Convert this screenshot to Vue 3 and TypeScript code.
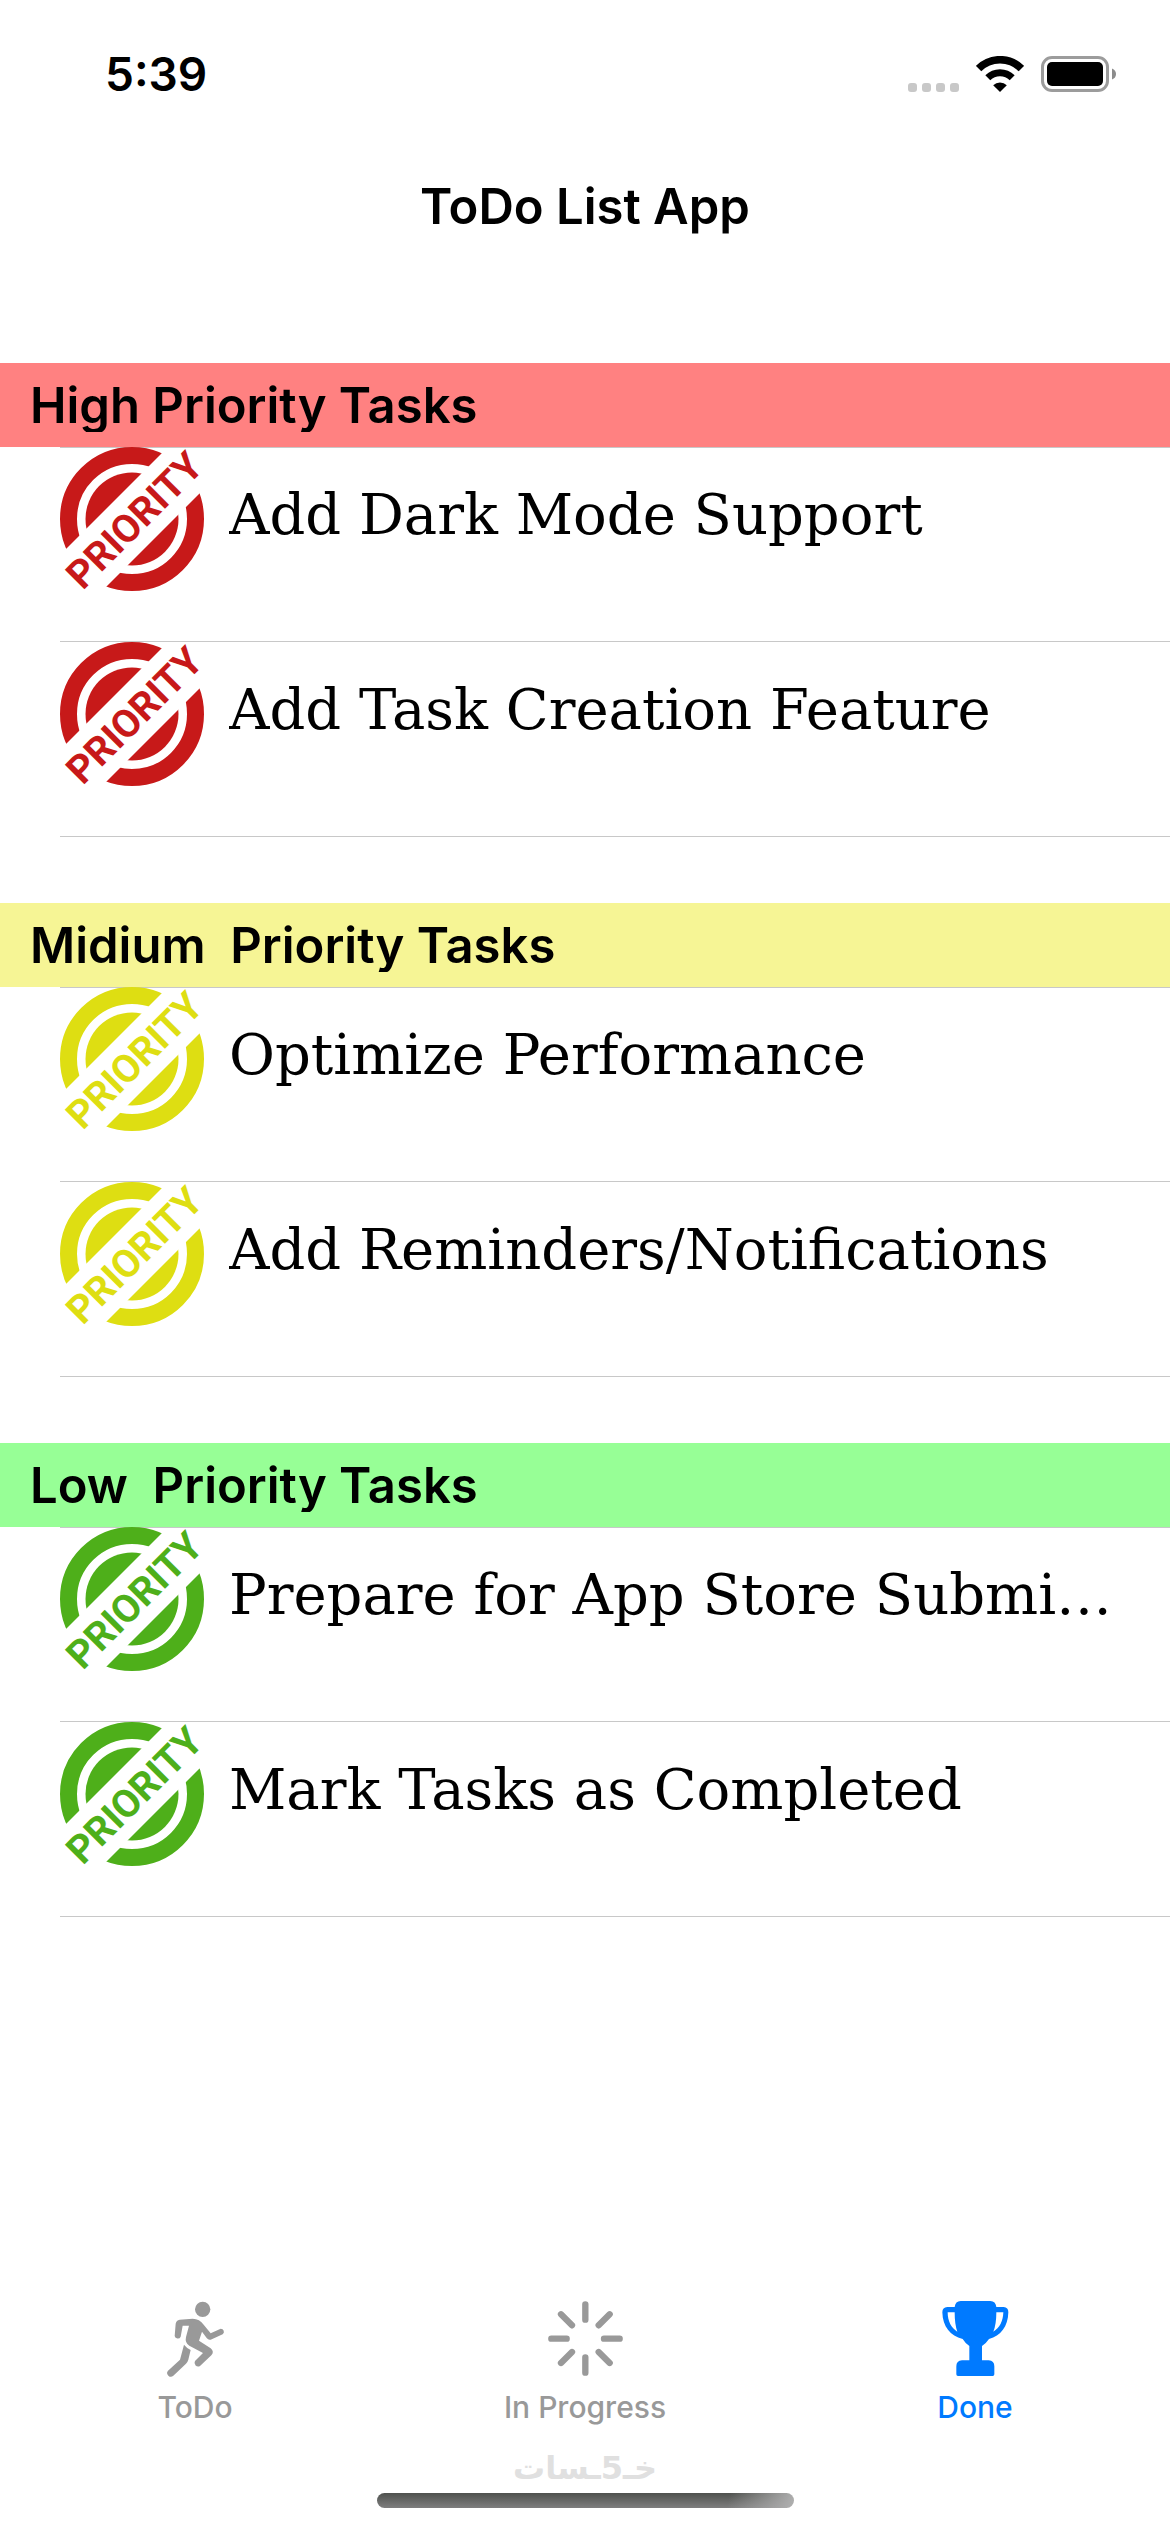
<script setup lang="ts">
import { ref } from 'vue'

type TabId = 'todo' | 'progress' | 'done'

interface Section {
  level: 'high' | 'medium' | 'low'
  title: string
  tasks: string[]
}

const sections: Section[] = [
  {
    level: 'high',
    title: 'High Priority Tasks',
    tasks: ['Add Dark Mode Support', 'Add Task Creation Feature'],
  },
  {
    level: 'medium',
    title: 'Midium  Priority Tasks',
    tasks: ['Optimize Performance', 'Add Reminders/Notifications'],
  },
  {
    level: 'low',
    title: 'Low  Priority Tasks',
    tasks: ['Prepare for App Store Submi…', 'Mark Tasks as Completed'],
  },
]

const tabs: { id: TabId; label: string }[] = [
  { id: 'todo', label: 'ToDo' },
  { id: 'progress', label: 'In Progress' },
  { id: 'done', label: 'Done' },
]

const activeTab = ref<TabId>('done')
</script>

<template>
  <div class="app">
    <header class="status">
      <time class="clock">5:39</time>
      <div class="indicators">
        <svg class="dots" viewBox="0 0 51 36" aria-hidden="true">
          <rect v-for="n in 4" :key="n" :x="(n - 1) * 14" y="27" width="9" height="9" rx="3" />
        </svg>
        <svg class="wifi" viewBox="0 0 48 36" aria-hidden="true">
          <path d="M2.6 12.6A30.2 30.2 0 0 1 45.4 12.6" fill="none" stroke="#000" stroke-width="7.6" />
          <path d="M11.8 21.8A17.3 17.3 0 0 1 36.2 21.8" fill="none" stroke="#000" stroke-width="7" />
          <path d="M24 36L17.2 29.2A9.6 9.6 0 0 1 30.8 29.2Z" />
        </svg>
        <svg class="battery" viewBox="0 0 75 36" aria-hidden="true">
          <rect x="1.5" y="1.5" width="65" height="33" rx="9.5" fill="none" stroke="#9c9c9c" stroke-width="3" />
          <rect x="6" y="6" width="56" height="24" rx="5" />
          <path d="M71 12.5Q75 14 75 18Q75 22 71 23.5Z" fill="#8c8c8c" />
        </svg>
      </div>
    </header>

    <h1 class="title">ToDo List App</h1>

    <main class="list">
      <section v-for="section in sections" :key="section.level" class="section" :class="section.level">
        <h2 class="section-head"><span>{{ section.title }}</span></h2>
        <ul class="tasks">
          <li v-for="task in section.tasks" :key="task" class="task">
            <svg class="stamp" viewBox="0 0 144 144" aria-hidden="true">
              <clipPath :id="'band-' + section.level">
                <path d="M0 0H108L0 108ZM186 0V186H0Z" />
              </clipPath>
              <g :clip-path="'url(#band-' + section.level + ')'">
                <circle cx="72" cy="72" r="63.5" fill="none" stroke="currentColor" stroke-width="17" />
                <circle cx="72" cy="72" r="46.5" fill="currentColor" />
              </g>
              <text class="stamp-text" transform="translate(74 73) rotate(-45)" y="14" text-anchor="middle">PRIORITY</text>
            </svg>
            <span class="task-name">{{ task }}</span>
          </li>
        </ul>
      </section>
    </main>

    <nav class="tabs">
      <button
        v-for="tab in tabs"
        :key="tab.id"
        type="button"
        class="tab"
        :class="{ active: tab.id === activeTab }"
        @click="activeTab = tab.id"
      >
        <svg v-if="tab.id === 'todo'" class="tab-icon" viewBox="82 63 225 228" aria-hidden="true">
          <circle cx="216" cy="88" r="23" fill="currentColor" />
          <path
            d="M147 119L186 116Q207 116 219 134L240 160L270 146A9.500 9.500 0 0 1 276 163L240 179Q233 181 228 174L214 155L205 182L240 205Q252 215 242 226L208 258A11 11 0 0 1 193 243L217 219L176 197Q162 188 166 171L175 137H156L150 170A9.500 9.500 0 0 1 132 168L135 131Q137 120 147 119Z"
            fill="currentColor"
          />
          <path
            d="M160 194Q168 204 180 210L173 239Q171 246 166 251L128 287A11 11 0 0 1 112 272L148 239Z"
            fill="currentColor"
          />
        </svg>
        <svg v-else-if="tab.id === 'progress'" class="tab-icon" viewBox="201 63 225 228" aria-hidden="true">
          <path
            d="M313 73V119M313 232V278M211 176H257M369 176H416M240 103L273 136M386 103L353 136M240 249L273 216M386 249L353 216"
            fill="none"
            stroke="currentColor"
            stroke-width="19"
            stroke-linecap="round"
          />
        </svg>
        <svg v-else class="tab-icon" viewBox="110 63 225 228" aria-hidden="true">
          <path
            fill="currentColor"
            fill-rule="evenodd"
            d="M178 63H267Q283 63 285 81H307Q321 82 321 97C320 140 298 168 263 177Q256 188 242 198V241H262Q279 242 279 259V283Q279 288 274 288H170Q165 288 165 283V259Q165 242 182 241H204V198Q192 190 184 177C147 168 124 140 123 97Q123 82 138 81H160Q162 63 178 63ZM160 97H139C139 124 150 144 168 155Q160 134 160 97ZM285 97Q285 134 276 155C295 144 305 124 306 97Z"
          />
        </svg>
        <span class="tab-label">{{ tab.label }}</span>
      </button>
    </nav>

    <footer class="bottom">
      <span class="brand" lang="ar" dir="rtl">خـ5ـسات</span>
      <span class="home-bar"></span>
    </footer>
  </div>
</template>

<style>
body {
  background: #fff;
}
</style>

<style scoped>
.app {
  display: flex;
  flex-direction: column;
  min-height: 100vh;
  font-family: Inter, 'Liberation Sans', sans-serif;
  color: #000;
}

.status {
  display: flex;
  justify-content: space-between;
  align-items: center;
  height: 148px;
  padding: 0 54px 0 105px;
}

.clock {
  font-size: 46px;
  font-weight: 600;
}

.indicators {
  display: flex;
  gap: 17px;
}

.indicators svg {
  height: 36px;
}

.dots {
  width: 51px;
  fill: #c8c8c8;
}

.wifi {
  width: 48px;
}

.battery {
  width: 75px;
}

.title {
  margin: 0;
  padding: 28px 0 125px;
  font-size: 49px;
  line-height: 62px;
  font-weight: 600;
  text-align: center;
}

.list {
  flex: 1;
  display: flex;
  flex-direction: column;
  gap: 66px;
}

.section-head {
  margin: 0;
  padding: 18px 30px;
  background: var(--band);
  font-size: 49px;
  line-height: 50px;
  font-weight: 600;
  white-space: pre;
}

/* The heading label is 51px tall and trims its descenders. */
.section-head span {
  display: block;
  height: 51px;
  margin-bottom: -3px;
  overflow: hidden;
}

.high {
  --band: #ff8181;
  --stamp: #c71919;
}

.medium {
  --band: #f6f595;
  --stamp: #dede12;
}

.low {
  --band: #97ff96;
  --stamp: #4eaf1a;
}

.tasks {
  margin: 0;
  padding: 0 0 0 60px;
  list-style: none;
}

.task {
  display: flex;
  align-items: flex-start;
  gap: 25px;
  height: 195px;
  padding-right: 30px;
  box-sizing: border-box;
  background: linear-gradient(#c8c8c8, #c8c8c8) bottom / 100% 1px no-repeat;
}

.task:first-child {
  background:
    linear-gradient(#c8c8c8, #c8c8c8) top / 100% 1px no-repeat,
    linear-gradient(#c8c8c8, #c8c8c8) bottom / 100% 1px no-repeat;
}

.stamp {
  flex: none;
  width: 144px;
  height: 144px;
  overflow: visible;
  color: var(--stamp);
}

.stamp-text {
  font-family: Roboto, 'Liberation Sans', sans-serif;
  font-size: 39px;
  font-weight: 700;
  fill: currentColor;
}

.task-name {
  min-width: 0;
  overflow: hidden;
  text-overflow: ellipsis;
  white-space: nowrap;
  font-family: 'DejaVu Serif', 'Liberation Serif', serif;
  font-size: 56px;
  line-height: 136px;
}

.tabs {
  display: grid;
  grid-template-columns: repeat(3, 1fr);
}

.tab {
  display: flex;
  flex-direction: column;
  align-items: center;
  gap: 12px;
  padding: 0;
  border: 0;
  background: none;
  color: #999;
  font-family: inherit;
  cursor: pointer;
}

.tab.active {
  color: #007aff;
}

.tab-icon {
  width: 75px;
  height: 76px;
}

.tab-label {
  font-size: 30px;
  line-height: 36px;
  font-weight: 500;
}

.bottom {
  display: flex;
  flex-direction: column;
  align-items: center;
  padding: 18px 0 24px;
}

.brand {
  height: 50px;
  font-family: 'DejaVu Sans', sans-serif;
  font-size: 32px;
  line-height: 50px;
  font-weight: 700;
  color: #e0e0e0;
}

.home-bar {
  width: 417px;
  max-width: 100%;
  height: 15px;
  border-radius: 8px;
  background:
    linear-gradient(100deg, transparent 84%, #b0b0b0 100%),
    linear-gradient(#4f514e, #7e7e7e);
}
</style>
